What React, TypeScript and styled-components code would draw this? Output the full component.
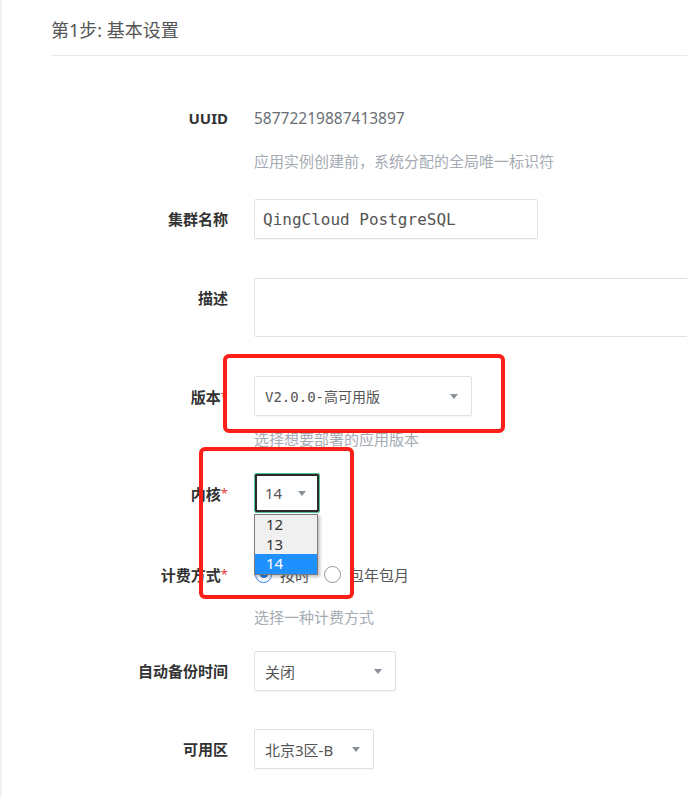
import styled, { createGlobalStyle } from "styled-components";

const GlobalStyle = createGlobalStyle`
  html, body {
    margin: 0;
    padding: 0;
    background: #fff;
    overflow: hidden;
  }
  body {
    font-family: "Noto Sans", "Noto Sans CJK SC", sans-serif;
  }
`;

const cjk = `"Noto Sans", "Noto Sans CJK SC", sans-serif`;
const mono = `"DejaVu Sans Mono", "Noto Sans CJK SC", monospace`;

function Caret() {
  return <CaretMark />;
}

export default function App() {
  return (
    <>
      <GlobalStyle />
      <Page>
        <Header>第1步: 基本设置</Header>
        <Form>
          <Field $gap={28}>
            <Label>UUID</Label>
            <Control>
              <Value>58772219887413897</Value>
              <Hint>应用实例创建前，系统分配的全局唯一标识符</Hint>
            </Control>
          </Field>

          <Field>
            <Label>集群名称</Label>
            <Control>
              <TextInput readOnly value="QingCloud PostgreSQL" />
            </Control>
          </Field>

          <Field>
            <Label>描述</Label>
            <Control>
              <TextArea readOnly />
            </Control>
          </Field>

          <Field $gap={24}>
            <Label>
              版本<Star>*</Star>
            </Label>
            <Control>
              <Select $width={218} $mono>
                <span>V2.0.0-高可用版</span>
                <Caret />
              </Select>
              <Hint>选择想要部署的应用版本</Hint>
            </Control>
            <Annotation $top={-22} $left={172} $w={282} $h={79} />
          </Field>

          <Field $gap={40}>
            <Label>
              内核<Star>*</Star>
            </Label>
            <Control>
              <SelectWrap>
                <Select $width={66} $focused>
                  <span>14</span>
                  <Caret />
                </Select>
                <OptionList>
                  <Option>12</Option>
                  <Option>13</Option>
                  <Option $active>14</Option>
                </OptionList>
              </SelectWrap>
            </Control>
            <Annotation $top={-26} $left={148} $w={155} $h={152} />
          </Field>

          <Field $gap={24}>
            <Label>
              计费方式<Star>*</Star>
            </Label>
            <Control>
              <RadioGroup>
                <RadioOption>
                  <Radio $checked />
                  <span>按时</span>
                </RadioOption>
                <RadioOption>
                  <Radio />
                  <span>包年包月</span>
                </RadioOption>
              </RadioGroup>
              <Hint>选择一种计费方式</Hint>
            </Control>
          </Field>

          <Field $gap={38}>
            <Label>自动备份时间</Label>
            <Control>
              <Select $width={142}>
                <span>关闭</span>
                <Caret />
              </Select>
            </Control>
          </Field>

          <Field>
            <Label>可用区</Label>
            <Control>
              <Select $width={120}>
                <span>北京3区-B</span>
                <Caret />
              </Select>
            </Control>
          </Field>
        </Form>
      </Page>
    </>
  );
}

const Page = styled.div`
  min-height: 797px;
  box-sizing: border-box;
  border-left: 2px solid #eef1f5;
  padding-left: 49px;
`;

const Header = styled.div`
  padding: 18px 0 13px;
  border-bottom: 1px solid #e6e9ee;
  font-family: ${cjk};
  font-size: 18px;
  line-height: 24px;
  color: #555;
`;

const Form = styled.div`
  padding-top: 42px;
`;

const Field = styled.div<{ $gap?: number }>`
  position: relative;
  display: grid;
  grid-template-columns: 177px auto;
  column-gap: 26px;
  align-items: start;
  margin-bottom: ${(p) => p.$gap ?? 39}px;
`;

const Label = styled.div`
  text-align: right;
  white-space: nowrap;
  font-family: ${cjk};
  font-size: 15px;
  font-weight: 700;
  line-height: 40px;
  color: #333;
`;

const Star = styled.span`
  color: #e5393b;
  font-weight: 400;
  font-size: 13px;
  vertical-align: 2px;
`;

const Control = styled.div`
  display: flex;
  flex-direction: column;
  align-items: flex-start;
`;

const Value = styled.div`
  font-size: 15.5px;
  line-height: 40px;
  color: #6b6f75;
`;

const Hint = styled.div`
  margin-top: 13px;
  font-size: 15px;
  line-height: 20px;
  color: #a5abb3;
  white-space: nowrap;
`;

const TextInput = styled.input`
  box-sizing: border-box;
  width: 284px;
  height: 40px;
  padding: 0 8px;
  border: 1px solid #dde2e8;
  border-radius: 2px;
  box-shadow: 0 1px 1px rgba(0, 0, 0, 0.03);
  font-family: ${mono};
  font-size: 16px;
  color: #555;
  outline: none;
`;

const TextArea = styled.textarea`
  box-sizing: border-box;
  width: 520px;
  height: 59px;
  margin: 0;
  border: 1px solid #dde2e8;
  border-radius: 2px;
  resize: none;
  outline: none;
`;

const SelectWrap = styled.div`
  position: relative;
`;

const Select = styled.div<{ $width: number; $mono?: boolean; $focused?: boolean }>`
  box-sizing: border-box;
  width: ${(p) => p.$width}px;
  height: 40px;
  display: flex;
  align-items: center;
  justify-content: space-between;
  padding: 0 13px 0 10px;
  border: 1px solid ${(p) => (p.$focused ? "#52c08f" : "#dde2e8")};
  border-radius: 2px;
  box-shadow: ${(p) =>
    p.$focused ? "inset 0 0 0 2px #2b2b2b" : "0 1px 1px rgba(0, 0, 0, 0.03)"};
  font-family: ${(p) => (p.$mono ? mono : cjk)};
  font-size: ${(p) => (p.$mono ? 14 : 15)}px;
  color: #555;
  white-space: nowrap;
`;

const CaretMark = styled.span`
  width: 0;
  height: 0;
  border-left: 4.5px solid transparent;
  border-right: 4.5px solid transparent;
  border-top: 5px solid #8a9098;
`;

const OptionList = styled.div`
  position: absolute;
  top: 41px;
  left: 0;
  width: 64px;
  box-sizing: border-box;
  background: #f0f0f0;
  border: 1px solid #7c7c7c;
  box-shadow: 2px 2px 3px rgba(0, 0, 0, 0.25);
  z-index: 3;
`;

const Option = styled.div<{ $active?: boolean }>`
  height: 19.5px;
  padding-left: 11px;
  font-size: 15px;
  line-height: 19.5px;
  color: ${(p) => (p.$active ? "#fff" : "#333")};
  background: ${(p) => (p.$active ? "#1e90ff" : "transparent")};
`;

const RadioGroup = styled.div`
  height: 40px;
  display: flex;
  align-items: center;
  font-size: 15px;
  color: #555;
`;

const RadioOption = styled.label`
  display: flex;
  align-items: center;
  gap: 8px;
  margin-right: 13px;
  white-space: nowrap;
`;

const Radio = styled.span<{ $checked?: boolean }>`
  position: relative;
  box-sizing: border-box;
  width: 17px;
  height: 17px;
  margin-left: 1px;
  border-radius: 50%;
  border: ${(p) => (p.$checked ? "1.5px solid #2f7fe6" : "1px solid #8f959c")};
  background: #fff;
  &::after {
    content: "";
    display: ${(p) => (p.$checked ? "block" : "none")};
    position: absolute;
    left: 50%;
    top: 50%;
    width: 8px;
    height: 8px;
    margin: -4px 0 0 -4px;
    border-radius: 50%;
    background: #2f7fe6;
  }
`;

const Annotation = styled.div<{ $top: number; $left: number; $w: number; $h: number }>`
  position: absolute;
  top: ${(p) => p.$top}px;
  left: ${(p) => p.$left}px;
  width: ${(p) => p.$w}px;
  height: ${(p) => p.$h}px;
  box-sizing: border-box;
  border: 4.5px solid #fb1f18;
  border-radius: 6px;
  pointer-events: none;
  z-index: 5;
`;
